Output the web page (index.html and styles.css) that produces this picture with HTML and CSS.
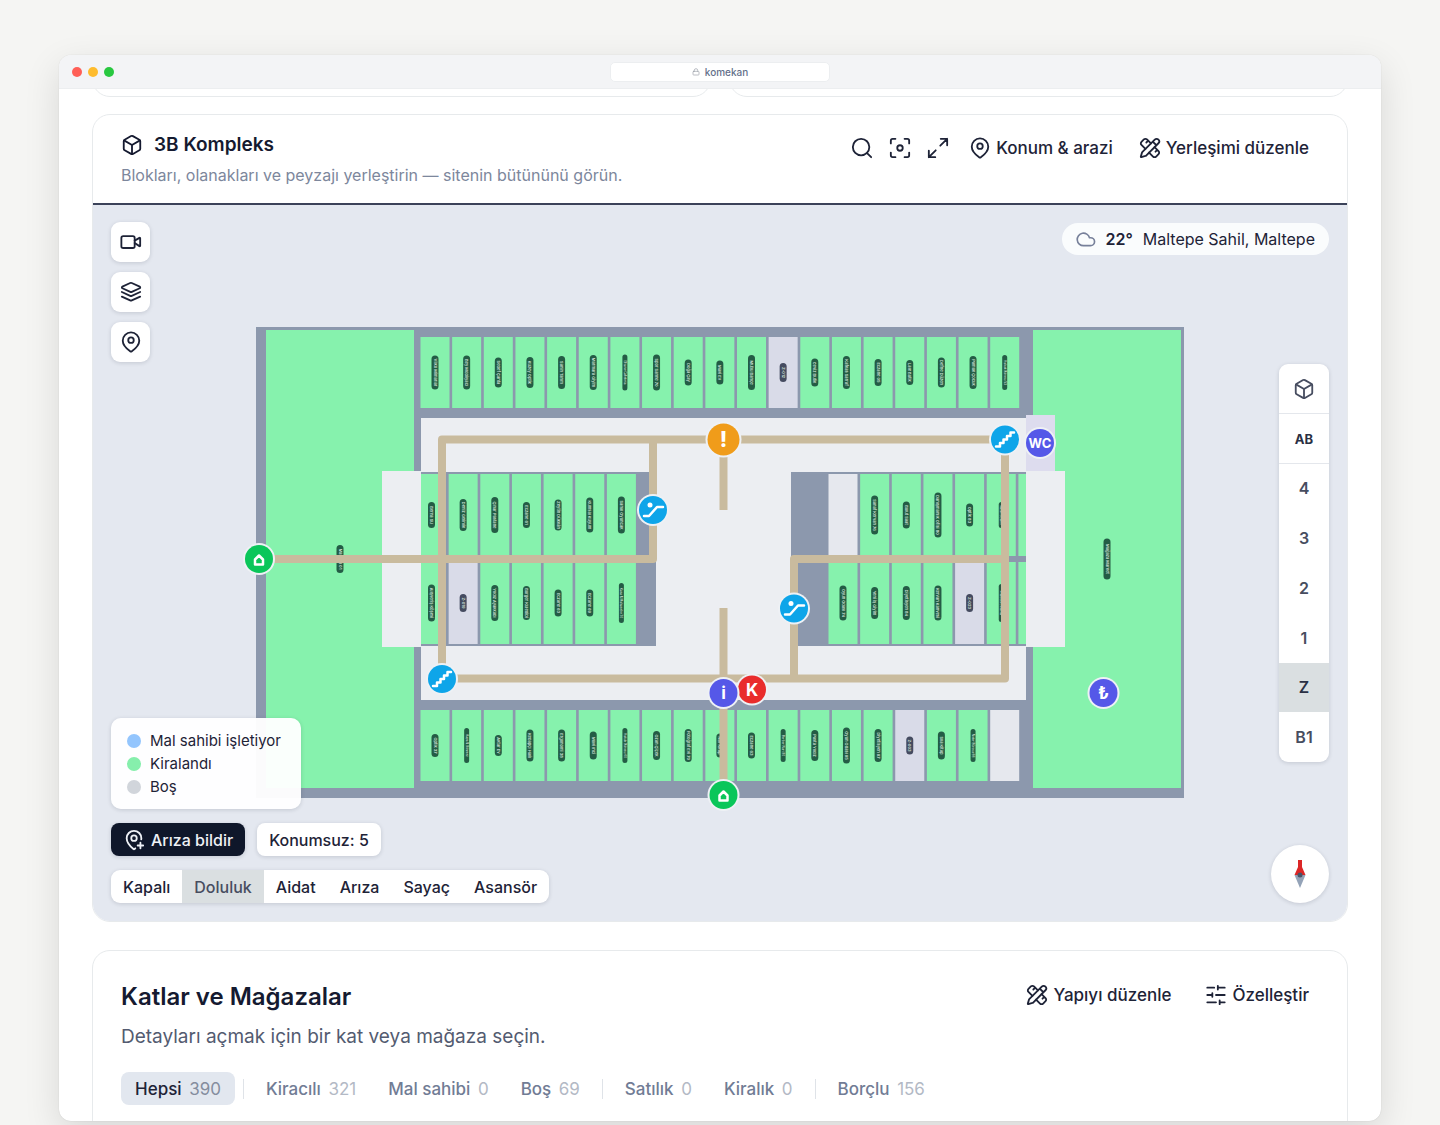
FILE: index.html
```html
<!DOCTYPE html>
<html lang="tr">
<head>
<meta charset="utf-8">
<meta name="viewport" content="width=device-width, initial-scale=1">
<title>komekan</title>
<link rel="stylesheet" href="styles.css">
</head>
<body>
<svg class="sprite" aria-hidden="true">
  <symbol id="i-cube" viewBox="0 0 24 24"><path d="M21 8a2 2 0 0 0-1-1.73l-7-4a2 2 0 0 0-2 0l-7 4A2 2 0 0 0 3 8v8a2 2 0 0 0 1 1.73l7 4a2 2 0 0 0 2 0l7-4A2 2 0 0 0 21 16Z"/><path d="m3.3 7 8.7 5 8.7-5M12 22V12"/></symbol>
  <symbol id="i-search" viewBox="0 0 24 24"><circle cx="11" cy="11" r="9"/><path d="m22 22-4.500-4.500"/></symbol>
  <symbol id="i-focus" viewBox="0 0 24 24"><circle cx="12" cy="12" r="3"/><path d="M2 7V4a2 2 0 0 1 2-2h3M17 2h3a2 2 0 0 1 2 2v3M22 17v3a2 2 0 0 1-2 2h-3M7 22H4a2 2 0 0 1-2-2v-3"/></symbol>
  <symbol id="i-expand" viewBox="0 0 24 24"><path d="M15 2h7v7M22 2l-7.500 7.500M9 22H2v-7M2 22l7.500-7.500"/></symbol>
  <symbol id="i-pin" viewBox="0 0 24 24"><path d="M21 10.500c0 5-5.500 9.700-8.400 11.800a1 1 0 0 1-1.200 0C8.500 20.200 3 15.500 3 10.500a9 9 0 0 1 18 0"/><circle cx="12" cy="10" r="3"/></symbol>
  <symbol id="i-pin-plus" viewBox="0 0 24 24"><path d="M19.900 11.300c.1-.4.100-.8.100-1.300a8 8 0 0 0-16 0c0 5 5.500 10.200 7.400 11.800a1 1 0 0 0 1.200 0l.8-.7"/><circle cx="12" cy="10" r="3"/><path d="M16 18h6M19 15v6"/></symbol>
  <symbol id="i-design" viewBox="0 0 24 24"><path d="M13 7 8.700 2.700a2.400 2.400 0 0 0-3.400 0L2.700 5.300a2.400 2.400 0 0 0 0 3.400L7 13M8 6l2-2M18 16l2-2M17 11l4.300 4.300a2.400 2.400 0 0 1 0 3.400l-2.600 2.600a2.400 2.400 0 0 1-3.400 0L11 17"/><path d="M21.200 6.800a1 1 0 0 0-4-4L3.800 16.200a2 2 0 0 0-.5.800L2 21.400a.5.500 0 0 0 .6.600L7 20.700a2 2 0 0 0 .8-.5ZM15 5l4 4"/></symbol>
  <symbol id="i-sliders" viewBox="0 0 24 24"><path d="M21.500 4H14M10 4H2.500M21.500 12H12M8 12H2.500M21.500 20H16M12 20H2.500M14 2v4M8 10v4M16 18v4"/></symbol>
  <symbol id="i-video" viewBox="0 0 24 24"><path d="m16 13 5.200 3.500a.5.500 0 0 0 .8-.4V7.900a.5.500 0 0 0-.8-.4L16 10.500"/><rect x="1.500" y="5.500" width="14.500" height="13" rx="2"/></symbol>
  <symbol id="i-layers" viewBox="0 0 24 24"><path d="M12.800 2.200a2 2 0 0 0-1.700 0L2.600 6.100a1 1 0 0 0 0 1.800l8.600 3.900a2 2 0 0 0 1.700 0l8.600-3.900a1 1 0 0 0 0-1.800ZM22 12l-9.200 4.200a2 2 0 0 1-1.700 0L2 12M22 17l-9.200 4.200a2 2 0 0 1-1.700 0L2 17"/></symbol>
  <symbol id="i-cloud" viewBox="0 0 24 24"><path d="M17.500 20H9a7.500 7.500 0 1 1 7.200-9.500h1.300a4.700 4.700 0 1 1 0 9.500Z"/></symbol>
  <symbol id="i-lock" viewBox="0 0 24 24"><rect x="3" y="10" width="18" height="11" rx="2"/><path d="M7 10V7a5 5 0 0 1 10 0v3"/></symbol>
</svg>

<main class="window">
  <header class="titlebar">
    <div class="lights"><span class="light light-red"></span><span class="light light-amber"></span><span class="light light-green"></span></div>
    <div class="address"><svg class="icon icon-lock"><use href="#i-lock"/></svg><span>komekan</span></div>
  </header>

  <div class="content">
    <div class="previous"><div class="card stub"></div><div class="card stub"></div></div>

    <section class="card complex">
      <header class="complex-head">
        <div>
          <h2 class="complex-title"><svg class="icon"><use href="#i-cube"/></svg>3B Kompleks</h2>
          <p class="complex-sub">Blokları, olanakları ve peyzajı yerleştirin — sitenin bütününü görün.</p>
        </div>
        <div class="actions">
          <div class="icon-group">
            <button class="icon-btn" aria-label="Ara"><svg class="icon"><use href="#i-search"/></svg></button>
            <button class="icon-btn" aria-label="Odakla"><svg class="icon"><use href="#i-focus"/></svg></button>
            <button class="icon-btn" aria-label="Tam ekran"><svg class="icon"><use href="#i-expand"/></svg></button>
          </div>
          <div class="text-group">
            <button class="text-btn"><svg class="icon"><use href="#i-pin"/></svg>Konum &amp; arazi</button>
            <button class="text-btn"><svg class="icon"><use href="#i-design"/></svg>Yerleşimi düzenle</button>
          </div>
        </div>
      </header>

      <div class="stage">
        <svg class="plan" id="plan" viewBox="93 205 1254 716" role="img" aria-label="Zemin kat planı">
          <rect class="wall" x="256" y="327" width="928" height="471"/>
          <rect class="rented" x="266" y="330" width="148" height="458"/>
          <rect class="rented" x="1033" y="330" width="148" height="458"/>
          <rect class="floor" x="421" y="418" width="605" height="282"/>
          <rect class="wall" x="421" y="472" width="235" height="174"/>
          <rect class="wall" x="791" y="472" width="235" height="174"/>
          <g id="units"></g>
          <rect class="floor" x="382" y="471" width="39" height="176"/>
          <rect class="floor" x="1026" y="471" width="39" height="176"/>
          <rect class="restroom" x="1026" y="415" width="29" height="56"/>
          <g id="labels"></g>
          <g class="routes">
            <path d="M442 679V439.500H1005V678.500H442"/>
            <path d="M259 559H653V439.500"/>
            <path d="M723.500 439V510M723.500 608V795"/>
            <path d="M1005 559H794V678.500"/>
          </g>
          <g id="markers"></g>
        </svg>

        <div class="tools">
          <button class="tool" aria-label="Kamera"><svg class="icon"><use href="#i-video"/></svg></button>
          <button class="tool" aria-label="Katmanlar"><svg class="icon"><use href="#i-layers"/></svg></button>
          <button class="tool" aria-label="Konumlar"><svg class="icon"><use href="#i-pin"/></svg></button>
        </div>

        <div class="weather"><svg class="icon"><use href="#i-cloud"/></svg><strong>22°</strong><span>Maltepe Sahil, Maltepe</span></div>

        <nav class="floors" aria-label="Katlar">
          <button class="level level-top" aria-label="3B görünüm"><svg class="icon"><use href="#i-cube"/></svg></button>
          <button class="level level-top level-block">AB</button>
          <button class="level">4</button>
          <button class="level">3</button>
          <button class="level">2</button>
          <button class="level">1</button>
          <button class="level level-on">Z</button>
          <button class="level">B1</button>
        </nav>

        <button class="compass" aria-label="Kuzeye çevir">
          <svg class="needle" viewBox="0 0 12 28"><path fill="#dc2626" d="M4 0h4v7l3.500 8H.5L4 7Z"/><path fill="#94a3b8" d="M.5 15h11L6 28Z"/><circle cx="6" cy="15" r="2.500" fill="#475569"/></svg>
        </button>

        <div class="dock">
          <ul class="legend">
            <li><span class="dot dot-owner"></span>Mal sahibi işletiyor</li>
            <li><span class="dot dot-rented"></span>Kiralandı</li>
            <li><span class="dot dot-empty"></span>Boş</li>
          </ul>
          <div class="faults">
            <button class="report"><svg class="icon"><use href="#i-pin-plus"/></svg>Arıza bildir</button>
            <button class="unplaced">Konumsuz: 5</button>
          </div>
          <div class="modes">
            <button class="mode">Kapalı</button><button class="mode mode-on">Doluluk</button><button class="mode">Aidat</button><button class="mode">Arıza</button><button class="mode">Sayaç</button><button class="mode">Asansör</button>
          </div>
        </div>
      </div>
    </section>

    <section class="card shops">
      <header class="shops-head">
        <div>
          <h2 class="shops-title">Katlar ve Mağazalar</h2>
          <p class="shops-sub">Detayları açmak için bir kat veya mağaza seçin.</p>
        </div>
        <div class="actions">
          <button class="text-btn"><svg class="icon"><use href="#i-design"/></svg>Yapıyı düzenle</button>
          <button class="text-btn"><svg class="icon"><use href="#i-sliders"/></svg>Özelleştir</button>
        </div>
      </header>
      <div class="filters">
        <button class="chip chip-on">Hepsi <span class="count">390</span></button>
        <span class="rule"></span>
        <button class="chip">Kiracılı <span class="count">321</span></button>
        <button class="chip">Mal sahibi <span class="count">0</span></button>
        <button class="chip">Boş <span class="count">69</span></button>
        <span class="rule"></span>
        <button class="chip">Satılık <span class="count">0</span></button>
        <button class="chip">Kiralık <span class="count">0</span></button>
        <span class="rule"></span>
        <button class="chip">Borçlu <span class="count">156</span></button>
      </div>
    </section>
  </div>
</main>
<script src="plan.js"></script>
</body>
</html>
```
FILE: styles.css
```css
* { box-sizing: border-box; }

body {
  margin: 0;
  background: #f5f5f3;
  color: #1e2337;
  font-family: Inter, "Liberation Sans", sans-serif;
  overflow: hidden;
}

h2, p, ul { margin: 0; padding: 0; }
ul { list-style: none; }

button {
  border: 0;
  background: none;
  padding: 0;
  color: inherit;
  font: inherit;
  cursor: pointer;
}

.sprite { position: absolute; width: 0; height: 0; }

.icon {
  width: 22px;
  height: 22px;
  flex: none;
  fill: none;
  stroke: currentColor;
  stroke-width: 2;
  stroke-linecap: round;
  stroke-linejoin: round;
}

/* Window frame */
.window {
  height: calc(100vh - 59px);
  margin: 55px 59px 4px;
  border-radius: 12px;
  background: #fff;
  overflow: hidden;
  box-shadow: 0 0 1px rgba(0, 0, 0, .2), 0 12px 36px rgba(0, 0, 0, .12);
}

.titlebar {
  position: relative;
  z-index: 1;
  display: grid;
  grid-template-columns: 1fr 220px 1fr;
  align-items: center;
  height: 34px;
  padding: 0 13px;
  background: #f3f4f6;
  border-bottom: 1px solid #eceef0;
}

.lights { display: flex; gap: 6px; }
.light { width: 10px; height: 10px; border-radius: 50%; }
.light-red { background: #ff5f57; }
.light-amber { background: #febc2e; }
.light-green { background: #28c840; }

.address {
  display: flex;
  align-items: center;
  justify-content: center;
  gap: 5px;
  height: 20px;
  border: 1px solid #eceef0;
  border-radius: 5px;
  background: #fff;
  color: #64708a;
  font-size: 10px;
  font-weight: 500;
}
.icon-lock { width: 8px; height: 8px; color: #9a9fa8; }

/* Cards */
.content { padding: 0 33px; }
.card { border: 1px solid #e7eaec; border-radius: 18px; background: #fff; }
.previous { display: grid; grid-template-columns: 1fr 1fr; gap: 18px; margin-top: -32px; }
.stub { height: 40px; }

.complex { margin-top: 17px; overflow: hidden; }

.complex-head {
  display: flex;
  justify-content: space-between;
  height: 90px;
  padding: 17px 38px 0 28px;
  border-bottom: 2px solid #3b4259;
}

.complex-title {
  display: flex;
  align-items: center;
  gap: 11px;
  font-size: 19px;
  line-height: 26px;
  font-weight: 600;
  color: #151a30;
}

.complex-sub { margin-top: 5px; font-size: 16px; line-height: 24px; color: #7d879c; }

.actions { display: flex; align-items: center; gap: 20px; height: 32px; }
.icon-group { display: flex; gap: 16px; }
.text-group { display: flex; gap: 26px; }
.icon-btn { display: flex; }
.text-btn { display: flex; align-items: center; gap: 5px; font-size: 17px; font-weight: 500; }

/* Plan stage */
.stage { position: relative; background: #e4e8f0; }
.plan { display: block; width: 100%; height: auto; }

.wall { fill: #8c98ad; }
.floor { fill: #eceef2; }
.rented { fill: #86f2ad; }
.vacant { fill: #d9dbe8; }
.closed { fill: #e6e8ee; }
.restroom { fill: #dddcee; }
.routes { fill: none; stroke: #c9bb9e; stroke-width: 8; stroke-linejoin: round; }
.tag { fill: #245c45; }
.tag-vacant { fill: #454b60; }
.tag-text {
  fill: #d3e2da;
  font-size: 4px;
  font-weight: 600;
  text-anchor: middle;
  dominant-baseline: central;
}
.tag-small { font-size: 3px; }
.marker-text {
  fill: #fff;
  font-size: 17px;
  font-weight: 700;
  text-anchor: middle;
  dominant-baseline: central;
}
.marker-text-wc { font-size: 13px; }
.marker-text-alert { font-size: 21px; font-weight: 800; }
.marker-line { fill: none; stroke: #fff; stroke-width: 2.5; stroke-linecap: round; stroke-linejoin: round; }

/* Overlays on the plan */
.tools { position: absolute; top: 17px; left: 18px; display: grid; gap: 10px; }
.tool {
  display: grid;
  place-items: center;
  width: 39px;
  height: 40px;
  border-radius: 9px;
  background: #fff;
  box-shadow: 0 1px 4px rgba(15, 23, 42, .15);
}

.weather {
  position: absolute;
  top: 18px;
  right: 18px;
  display: flex;
  align-items: center;
  gap: 10px;
  height: 32px;
  padding: 0 14px;
  border-radius: 16px;
  background: #fafcfd;
  font-size: 16px;
}
.weather .icon { width: 20px; height: 20px; color: #77809a; }
.weather strong { font-weight: 600; }

.floors {
  position: absolute;
  top: 159px;
  right: 18px;
  display: flex;
  flex-direction: column;
  width: 50px;
  height: 398px;
  border-radius: 9px;
  background: #fff;
  box-shadow: 0 1px 4px rgba(15, 23, 42, .15);
  overflow: hidden;
}
.level {
  display: grid;
  place-items: center;
  flex: 1;
  font-size: 16px;
  font-weight: 600;
  color: #474d60;
}
.level-top { box-shadow: inset 0 -1px #e4e7ec; }
.level-block { font-size: 13px; font-weight: 700; color: #2a3044; }
.level-on { background: #dadfe1; color: #2a3044; }

.compass {
  position: absolute;
  right: 18px;
  bottom: 18px;
  display: grid;
  place-items: center;
  width: 58px;
  height: 58px;
  border-radius: 50%;
  background: #fff;
  box-shadow: 0 1px 4px rgba(15, 23, 42, .15);
}
.needle { width: 12px; height: 28px; }

.dock {
  position: absolute;
  left: 18px;
  bottom: 18px;
  display: flex;
  flex-direction: column;
  align-items: flex-start;
  gap: 14px;
}

.legend {
  width: 190px;
  padding: 11px 16px;
  border-radius: 10px;
  background: rgba(255, 255, 255, .96);
  box-shadow: 0 1px 4px rgba(15, 23, 42, .15);
  font-size: 15px;
  line-height: 23px;
}
.legend li { display: flex; align-items: center; gap: 9px; }
.dot { width: 14px; height: 14px; border-radius: 50%; }
.dot-owner { background: #93c5fd; }
.dot-rented { background: #86efac; }
.dot-empty { background: #d1d5db; }

.faults { display: flex; gap: 12px; }
.report, .unplaced {
  display: flex;
  align-items: center;
  gap: 6px;
  height: 33px;
  padding: 0 12px;
  border-radius: 8px;
  background: #fff;
  box-shadow: 0 1px 4px rgba(15, 23, 42, .15);
  font-size: 16px;
  font-weight: 500;
}
.report { background: #0f172a; color: #eef1f6; }

.modes {
  display: flex;
  height: 33px;
  border-radius: 9px;
  background: #fff;
  box-shadow: 0 1px 4px rgba(15, 23, 42, .15);
  overflow: hidden;
}
.mode { padding: 0 12px; font-size: 16px; font-weight: 500; }
.mode-on { background: #dadfe1; color: #474d60; }

/* Floors and shops */
.shops { height: 240px; margin-top: 28px; padding: 28px 38px 28px 28px; }
.shops-head { display: flex; justify-content: space-between; }
.shops-title { font-size: 24px; line-height: 36px; font-weight: 600; color: #151a30; }
.shops-sub { margin-top: 8px; font-size: 19px; line-height: 28px; color: #535b70; }
.shops .actions { gap: 34px; }

.filters { display: flex; align-items: center; gap: 4px; margin-top: 21px; }
.chip {
  height: 33px;
  padding: 0 14px;
  border-radius: 8px;
  font-size: 17px;
  font-weight: 500;
  color: #717c95;
}
.chip-on { background: #e2e7ef; color: #1e2337; }
.count { margin-left: 3px; font-weight: 400; color: #b3b9c5; }
.chip-on .count { color: #858d9e; }
.rule { width: 1px; height: 20px; margin: 0 4px; background: #dfe3e8; }
```
FILE: plan.js
```js
// Shop units on the ground floor. Each unit: [name, tag length, kind]
// kind: "" rented, "v" vacant, "c" closed, "s" rented with a small tag.
const PITCH = 31.65;
const rows = [
  { x: 420.5, y: 337, h: 71, units: [
    ["Vilko Mimarlar", 34], ["Bey Mobilyacı", 34], ["Sedef Çanta", 30], ["Kuzey Optik", 31],
    ["Sahin Tarım", 33], ["Marmara Giyim", 35], ["Efsane Cafeteria", 36, "s"], ["Spor Sahne 70", 36],
    ["Doğa Çay", 26], ["Mavi Ev", 24], ["Mutlu Bahçe", 35], ["Z-012", 19, "v"],
    ["Ceviz Butik", 28], ["Kafkas Sarraf", 33], ["Eczane 05", 27], ["Lale Butik", 25],
    ["Defne Düzen", 30], ["Pamuk Çocuk", 33], ["Hukuk Bürosu 53", 35, "s"]] },
  { x: 417, y: 474, h: 82, units: [
    ["Berna Su", 26], ["Deniz Gelinlik", 32], ["Çınar Pastane", 36], ["Eczane 61", 26],
    ["Zeytin Dükkân", 31], ["Kumsal Kuyum", 35], ["Sanal Oyuncak", 37]] },
  { x: 417, y: 562, h: 82, units: [
    ["Alışveriş Köşesi", 37], ["Z-019", 18, "v"], ["Yıldız Ayakkabı", 36], ["Burger Kuledibi", 34],
    ["Eczane 63", 27], ["Eczane 69", 27], ["Kasa & Muhasebe 70", 40, "s"]] },
  { x: 828.5, y: 474, h: 82, units: [
    ["", 0, "c"], ["Sahaf Kervan 76", 39], ["Bulut Saat", 27], ["Danışmanlık Ofisi 80", 45],
    ["Optik 83", 23], ["Nazar Bijuteri", 26, "s"], ["", 0]] },
  { x: 828.5, y: 562, h: 82, units: [
    ["Oyun Odası 74", 35], ["Yeni İş Giyim", 32], ["Diyetisyen 84", 34], ["Kervan Kahvesi", 35],
    ["Z-023", 18, "v"], ["Anadolu Lokanta", 38, "s"], ["", 0]] },
  { x: 420.5, y: 710, h: 71, units: [
    ["Optik 37", 23], ["Kaya & Sönmez", 35, "s"], ["Aktar Ev", 21], ["Kebapçı Halil", 32],
    ["Ergonomi 38", 32], ["Mavi Inci", 28], ["Hukuk Bürosu 40", 35, "s"], ["Ozan Çiçek", 29],
    ["Fotoğraf Evi 70", 33], ["Nar Kitap", 24], ["Eczane 63", 26], ["Berber Nuri 90", 33, "s"],
    ["Pasta Yıldız", 31], ["Oyun Odası 95", 36], ["Diyetisyen 97", 33], ["Z-003", 18, "v"],
    ["Sıla Kitap", 28], ["Noter Bürosu 66", 33, "s"], ["", 0, "c"]] }
];

const unitClass = { v: "vacant", c: "closed" };
let units = "";
let labels = "";

function label(name, x, y, length, kind) {
  const w = kind === "s" ? 5 : 7;
  return `<g transform="translate(${x} ${y}) rotate(90)">
    <rect class="tag${kind === "v" ? " tag-vacant" : ""}" x="${-length / 2}" y="${-w / 2}" width="${length}" height="${w}" rx="${w / 2}"/>
    <text class="tag-text${kind === "s" ? " tag-small" : ""}">${name.replace("&", "&amp;")}</text></g>`;
}

for (const row of rows) {
  row.units.forEach(([name, length, kind], i) => {
    const x = row.x + i * PITCH;
    const w = Math.min(29, 1026 - x);
    units += `<rect class="${unitClass[kind] || "rented"}" x="${x}" y="${row.y}" width="${w}" height="${row.h}"/>`;
    if (name) labels += label(name, x + 14.5, row.y + row.h / 2, length, kind);
  });
}
labels += label("Mağaza 01", 340, 559, 28, "");
labels += label("Mağaza Market", 1107, 559, 41, "");

const glyphs = {
  stairs: '<path class="marker-line" d="M-9 7h4V3.500h3.500V0H2v-3.500h3.500V-7H9"/>',
  escalator: '<path class="marker-line" d="M-9 6h5L4-3h6"/><circle cx="-3" cy="-5" r="2.500" fill="#fff"/>',
  home: '<path class="marker-line" d="M-4 5.500v-5L0-3.500 4 .5v5Z"/>'
};
const markers = [
  [723.500, 439.500, "#f09c1a", "!", 16, "marker-text-alert"],
  [1005, 439.500, "#0ea5e9", "stairs", 14],
  [442, 679, "#0ea5e9", "stairs", 14],
  [653, 510, "#0ea5e9", "escalator", 14],
  [794, 608.500, "#0ea5e9", "escalator", 14],
  [1040, 443, "#5558e8", "WC", 14, "marker-text-wc"],
  [259, 559, "#0ac65a", "home", 14],
  [723.500, 795, "#0ac65a", "home", 14],
  [752, 689.500, "#e92c2c", "K", 14],
  [723.500, 693, "#5558e8", "i", 14],
  [1103.500, 693, "#5558e8", "₺", 14]
];

document.getElementById("units").innerHTML = units;
document.getElementById("labels").innerHTML = labels;
document.getElementById("markers").innerHTML = markers.map(([x, y, color, mark, r, extra]) =>
  `<g transform="translate(${x} ${y})"><circle r="${r + 2}" fill="#eef1f5"/><circle r="${r}" fill="${color}"/>${
    glyphs[mark] || `<text class="marker-text ${extra || ""}">${mark}</text>`}</g>`).join("");
```
